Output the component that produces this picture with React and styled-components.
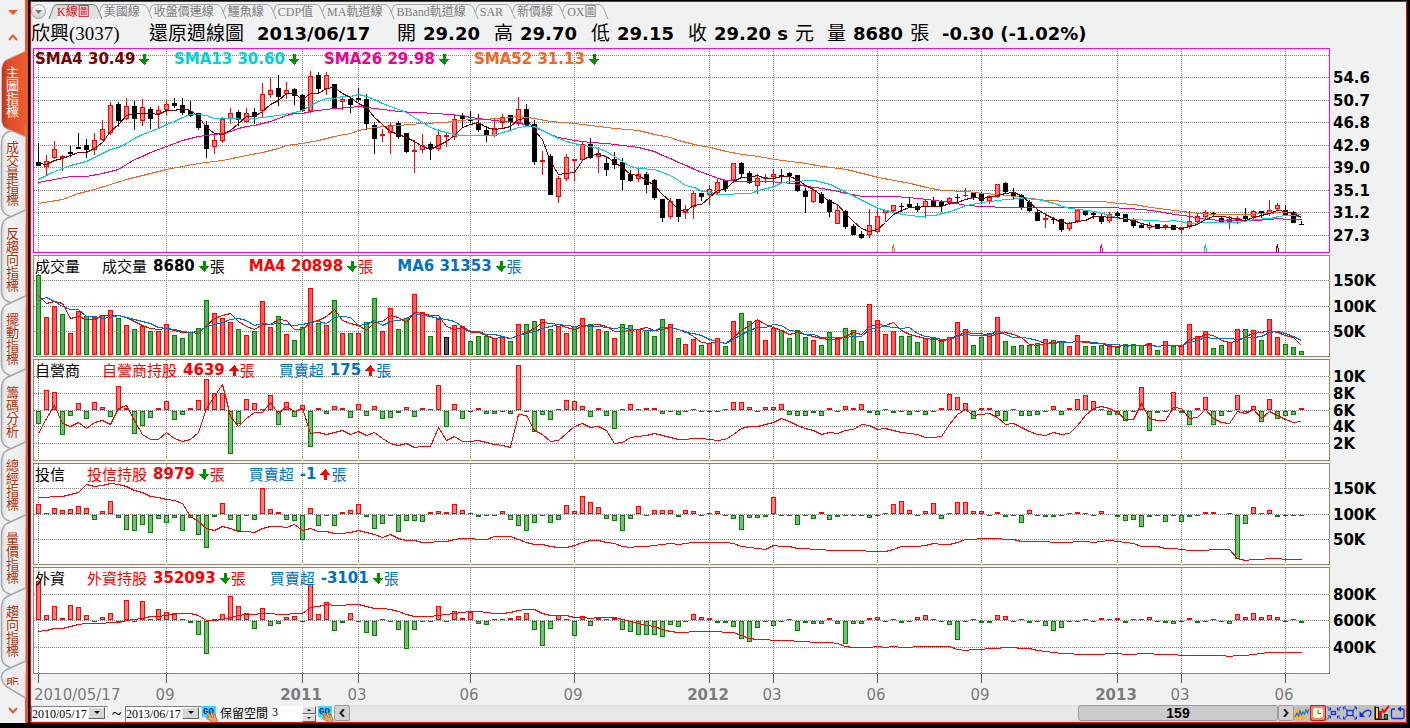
import React from 'react';
import styled, { createGlobalStyle } from 'styled-components';

const GlobalStyle = createGlobalStyle`
* { box-sizing: border-box; }
body {
  margin: 0;
  background: #000;
}
button, select, input { font: inherit; color: inherit; margin: 0; }
svg { display: block; }
`;

const WIDE = '"DejaVu Sans", "Noto Sans CJK TC", sans-serif';
const SERIF = '"Liberation Serif", "Noto Sans CJK TC", serif';

/* ---------- data ---------- */

const LEFT = 33;
const WIDTH = 1297;
// the time scale loses one pixel after the 81st week
const weekX = i => (i > 80 ? 37 : 38) + i * 8;

// high, open/close top, open/close bottom, low, colour
const candles = `143 162 166 166 k,155 161 167 175 r,141 149 158 159 r,155 156 158 171 r,146 152 154 157 k,133 147 149 149 k,139 145 150 158 k,133 140 150 155 r,120 129 140 141 r,102 105 133 135 r,
102 104 121 127 k,98 106 119 120 r,101 106 119 130 k,99 107 121 126 r,107 109 119 129 k,106 110 114 128 r,100 104 110 115 r,98 103 106 108 k,98 105 113 115 k,101 111 116 117 k,
113 113 128 130 k,121 125 149 158 k,134 140 147 154 r,117 119 141 143 r,108 113 119 124 r,110 112 120 126 k,108 113 122 123 r,108 112 117 124 k,83 94 111 117 r,78 90 95 98 r,
75 88 97 106 k,82 90 94 99 r,88 89 96 105 k,94 95 111 112 k,71 76 111 113 r,72 75 89 93 k,72 75 89 95 r,84 84 108 108 k,97 99 102 110 r,97 99 105 113 k,
88 98 100 102 k,94 99 124 130 k,122 125 139 154 k,129 134 136 142 r,122 125 133 154 r,121 123 137 139 k,133 133 152 153 k,140 150 152 173 r,134 145 150 153 r,142 144 149 160 k,
129 135 149 151 r,132 135 137 147 r,115 119 137 140 r,113 115 119 127 k,111 119 121 123 k,114 124 130 132 k,126 130 136 142 k,119 128 136 137 r,114 117 123 128 r,115 115 122 130 k,
97 109 124 126 r,104 109 125 127 k,120 124 162 165 k,151 160 162 175 r,154 156 195 195 k,176 178 197 203 r,154 157 179 181 r,159 159 161 181 r,141 144 160 161 r,138 144 158 159 k,
147 153 157 173 r,156 163 170 176 k,152 159 165 169 k,158 162 180 190 k,170 174 181 182 k,169 174 179 182 r,172 174 185 193 k,179 180 198 200 k,199 199 218 222 k,198 201 217 219 r,
199 199 217 222 k,205 209 213 219 r,191 193 207 219 r,193 193 197 201 k,185 189 195 205 r,178 182 193 194 r,180 180 189 192 k,163 163 180 183 r,162 163 174 178 k,171 173 183 184 k,
174 178 186 194 r,174 177 179 183 r,169 174 177 185 r,169 175 176 182 k,172 173 176 184 k,175 175 191 192 k,188 191 197 213 k,189 190 202 203 r,192 194 203 204 k,199 200 212 217 k,
204 210 224 224 r,210 211 227 229 k,224 226 235 235 k,231 234 238 239 k,209 225 235 238 r,209 216 232 233 r,210 210 213 222 r,205 205 211 213 r,203 206 207 212 k,198 204 207 208 k,
203 206 210 212 k,200 201 207 218 r,197 201 206 207 k,200 202 206 212 k,197 198 202 205 r,194 197 198 203 k,188 195 196 197 r,193 193 197 200 k,192 194 201 204 k,195 196 201 204 r,
184 184 197 198 r,182 183 192 194 k,188 192 196 199 k,194 195 207 210 k,200 202 211 212 k,210 212 221 221 k,213 218 220 228 r,217 219 220 224 k,219 219 230 232 k,222 223 229 231 r,
210 210 221 223 r,210 210 215 216 k,211 213 215 219 k,213 217 222 224 k,212 214 221 223 r,211 213 216 217 k,214 214 222 222 k,218 220 226 228 k,224 225 228 228 k,222 225 228 230 r,
224 224 229 229 k,224 225 227 230 r,225 225 230 230 k,227 227 230 234 r,211 221 226 229 r,214 216 222 225 r,210 212 217 219 r,212 213 215 216 k,217 218 222 223 k,216 219 222 229 r,
216 218 220 224 r,208 216 219 220 k,210 211 217 219 r,211 211 213 218 k,200 210 214 216 r,203 205 209 210 r,205 210 215 216 k,211 212 223 223 k,221 224 225 225 k`
  .split(',')
  .map(row => {
    const [high, top, bottom, low, tone] = row.trim().split(' ');
    return { high: +high, top: +top, bottom: +bottom, low: +low, tone };
  });

const volumes = `g275 r317 r306 g314 r333 r311 g316 r317 r315 r310 g318 r325 g329 r326 g331 r331 r324 g335 g338 g332
g328 g300 r313 r318 r322 g329 r335 g331 r301 r327 g316 r334 g340 g327 r288 g323 r325 g300 r333 g333
r333 g322 g298 r331 r308 g329 g318 r294 r312 g336 r319 k337 r325 r326 g341 g336 g336 r338 r337 g341
r324 g324 g321 r319 g329 r326 r333 g326 r318 g324 r329 g331 r338 g324 g325 r329 g330 g336 g319 r324
g338 r344 r339 g345 r343 r338 g346 r321 g313 g321 r320 r340 r328 g330 g338 g330 g337 r340 g345 g332
r338 g328 g330 g341 r304 r320 r334 r331 g336 g336 g342 r338 g338 g341 r337 r322 r329 g345 g337 r333
r317 g341 g346 g345 g345 g343 r339 g340 g341 r346 r335 g346 g346 g345 r345 g347 g344 g344 g345 r343
g350 r341 g346 r345 r324 r336 r331 g348 g345 r342 r329 g329 r330 g340 r319 r337 g344 g347 g351`
  .split(/\s+/)
  .map(v => ({ tone: v[0], top: +v.slice(1) }));

const numbers = text => text.trim().split(/\s+/).map(Number);

const dealerBars = numbers(`-13 20 18 -24 -5 7 -8 8 3 -6 24 2 -23 -15 -7 2 9 -9 -4 2 10 31 17 17 -43 -13 11 7 1 15 -14 8 -6 5 -36 2 -3 4 2 -7
6 -5 4 -8 -7 -2 3 -6 2 1 25 -16 6 -8 -1 2 -3 -3 -1 -3 45 -1 -21 -4 -9 1 10 9 4 -6 2 -5 -18 1 6 1 2 2 -3 -1 -4 -1
1 -1 -1 -1 1 8 8 3 -1 3 3 6 -4 -5 -5 -2 -5 2 -1 4 2 6 -2 -4 1 -2 -1 -4 -1 -4 -1 2 16 13 7 -8 2 2 -5 -10 1 -5 -5 -4 -1
4 -4 2 11 15 9 1 -4 -4 -10 -1 23 -20 -2 -1 18 -2 -14 2 13 -14 -5 -1 15 -1 4 -11 11 -8 -5 -4 2`);
const dealerLine = numbers(`433 418 405 423 426 422 428 422 420 424 408 405 420 434 439 439 432 438 441 439 432 408 396 384 416 426 418 412 412 402 413 406 411 408 433 432 434 432 430 434
431 435 432 438 443 445 443 447 446 446 427 440 436 441 441 440 442 444 445 447 414 415 430 434 441 440 433 426 423 427 426 430 443 442 437 436 435 433 435 437 439 439
438 438 439 440 439 434 428 426 426 424 422 418 421 425 428 430 434 432 433 430 429 424 425 429 428 430 432 433 434 437 437 436 424 414 409 415 414 413 417 424 423 427 431 434 435
432 434 433 425 415 408 406 408 412 419 419 403 418 420 420 407 408 418 417 409 418 422 423 411 413 409 418 411 415 419 422 421`);

const trustBars = numbers(`10 1 6 4 5 8 6 -5 3 13 -3 -15 -16 -10 -18 -4 -8 -3 -16 -3 -20 -33 -2 11 -5 -16 -1 -5 26 5 2 -5 -6 -25 6 -11 -1 -11 2 4
10 -2 -14 -9 -1 -17 -6 -6 -7 2 3 2 10 4 1 -2 -1 -1 3 -5 -11 -16 -8 -1 -8 -5 9 3 18 12 7 -4 -6 -16 -4 8 -1 4 4 4 -2 4
3 -1 1 3 -1 -4 -15 -3 -3 -2 17 -1 -1 -10 -1 -4 2 -5 -2 -1 -1 -1 -3 -1 1 10 13 4 -1 3 11 -4 1 12 12 3 3 -1 2 -2 -1 -8 4 -1 -2
-2 -1 1 2 1 -1 3 0 -2 -6 -5 -12 -2 -1 -7 -1 -7 -2 -1 2 2 0 1 -44 -9 7 1 4 -2 -1 -1 -1`);
const trustLine = numbers(`497 497 496 496 494 492 484 486 485 483 484 486 490 492 496 497 499 500 503 516 521 528 530 526 528 531 531 532 528 526 526 527 524 530 528 531 531 533 533 532
530 532 534 537 534 538 540 540 542 542 541 541 539 538 538 539 539 536 536 536 539 542 544 544 546 547 547 545 542 540 540 542 543 546 547 546 546 545 544 543 544 543
542 542 542 542 542 543 546 547 548 549 545 546 546 548 548 549 549 550 550 550 550 550 551 551 551 549 546 546 546 545 543 544 544 542 539 539 538 538 538 539 539 541 541 541 541
542 542 542 541 541 542 541 540 541 542 543 546 546 546 548 548 549 550 550 550 549 549 549 558 560 559 559 558 558 559 559 559`);

const foreignBars = numbers(`39 5 14 2 15 13 5 -1 3 7 -1 20 -1 19 1 11 8 6 1 -2 -14 -33 1 6 24 14 7 -8 12 -5 -3 3 4 -1 36 6 18 -10 -2 7
-1 -12 -15 1 -1 -9 -28 -9 -1 -1 14 -1 9 2 8 -3 -4 1 1 2 4 7 -9 -25 -8 5 1 -15 4 -5 2 1 2 -9 -11 -14 -14 -14 -16 -4 -6 -1
6 3 2 -2 -2 -6 -18 -21 -7 -1 -5 -1 1 -10 -2 -3 -3 2 -3 -23 -3 -3 2 3 -1 1 -2 -1 3 5 1 -1 -4 -19 -1 1 -2 -2 5 4 -1 1 -2 -1 -5
-10 -7 -1 -1 1 -1 2 1 2 -2 1 1 3 -1 -2 -3 -1 2 -2 -1 1 -1 -3 6 3 7 3 5 3 -1 1 -2`);
const foreignLine = numbers(`631 630 628 628 626 624 623 623 623 622 622 620 619 618 616 616 615 613 613 613 615 620 620 619 617 615 614 614 613 613 614 614 613 613 607 606 604 605 605 604
604 606 608 608 609 611 614 616 616 616 615 614 613 612 611 611 612 613 613 612 610 609 609 613 615 615 615 617 617 618 617 617 617 619 621 623 625 626 629 631 632 632
631 631 631 631 632 632 635 638 639 639 640 640 640 641 641 642 642 642 643 646 647 647 647 646 647 646 647 647 646 646 646 646 646 649 650 649 649 648 648 647 647 648 648 650 651
652 653 653 654 654 654 654 653 653 654 654 653 653 654 654 654 655 655 655 655 655 655 656 655 655 654 653 652 652 652 652 652`);

const sma13 = '38,179 52,172 62,168 70,165 78,163 86,161 94,157 102,153 110,149 118,147 126,143 134,138 142,134 150,131 158,128 166,124 174,121 182,117 190,114 198,114 206,115 214,118 230,118 246,119 262,117 278,115 294,112 302,110 310,105 318,101 326,98 334,98 342,96 350,96 358,94 366,96 374,99 382,103 398,109 406,112 414,117 422,122 430,127 438,130 446,132 454,134 462,135 494,135 502,132 510,130 518,127 526,126 534,126 542,130 550,134 558,138 566,141 574,143 582,145 590,146 598,148 606,151 614,156 622,161 630,166 638,168 654,169 662,172 670,175 678,180 685,185 694,187 702,191 710,192 718,194 750,193 758,190 766,188 774,186 782,182 790,181 814,180 830,184 838,188 846,192 854,196 862,200 870,204 878,208 886,210 894,212 902,214 910,215 918,216 934,215 942,213 950,211 958,208 966,205 982,202 990,201 1006,199 1022,198 1038,199 1046,201 1054,203 1062,206 1070,208 1094,211 1102,213 1110,215 1118,218 1134,219 1150,220 1166,221 1174,220 1190,223 1206,222 1222,222 1238,222 1254,219 1270,218 1278,216 1286,215 1294,215 1301,217';
const sma26 = '38,182 54,179 70,176 86,176 102,173 110,171 118,169 126,164 134,159 142,156 150,152 158,149 166,146 174,143 182,140 190,138 198,136 206,135 222,133 230,131 238,128 246,126 254,125 262,123 270,121 278,118 286,115 294,113 302,113 310,111 326,109 334,108 350,107 358,106 366,107 382,109 398,111 414,112 438,113 446,114 462,115 470,117 478,118 486,119 494,120 502,121 518,122 526,125 534,127 542,130 550,134 558,137 574,140 590,142 606,143 622,145 638,147 646,149 654,151 662,155 670,158 678,162 686,165 694,169 702,172 710,175 718,178 726,180 742,181 766,181 782,182 798,184 806,186 822,188 838,191 846,193 862,196 894,196 918,198 934,200 950,202 966,205 982,206 1006,207 1110,207 1126,208 1142,209 1158,211 1174,214 1190,216 1206,219 1222,220 1254,220 1270,219 1278,218 1286,219 1301,219';
const sma52 = '38,203 62,199 78,193 94,189 110,184 126,179 142,175 166,169 182,166 198,163 222,160 246,155 262,152 278,148 286,145 302,143 318,140 334,136 350,133 358,130 374,127 398,125 422,123 446,122 454,120 478,119 502,118 518,116 534,118 550,121 574,123 590,125 614,128 638,130 654,134 670,137 678,140 694,144 710,147 726,151 742,154 758,156 774,159 790,161 806,163 822,166 846,169 862,173 878,177 894,180 910,183 926,187 942,190 966,191 982,193 998,194 1014,196 1030,198 1046,200 1070,201 1102,201 1118,203 1134,204 1150,207 1166,209 1182,211 1198,213 1214,214 1246,214 1262,213 1286,212 1301,214';

// moving average over the last n values, with known leading values in front
const average = (values, n, lead) =>
  values.map((_, i) =>
    i < lead.length
      ? lead[i]
      : Math.round(values.slice(i - n + 1, i + 1).reduce((a, b) => a + b, 0) / n)
  );

const toPoints = ys => ys.map((y, i) => `${weekX(i)},${y}`).join(' ');

const closes = candles.map(c => (c.tone === 'r' ? c.top : c.bottom));
const sma4 = toPoints(average(closes, 4, [163, 164, 160]));
const tops = volumes.map(v => v.top);
const volumeMa4 = toPoints(average(tops, 4, [295, 303, 301]));
const volumeMa6 = toPoints(average(tops, 6, [300, 297, 301, 306, 309]));

const months = [
  { x: 38, text: '2010/05/17', start: true },
  { x: 166, text: '09' },
  { x: 302, text: '2011', bold: true },
  { x: 358, text: '03' },
  { x: 470, text: '06' },
  { x: 574, text: '09' },
  { x: 709, text: '2012', bold: true },
  { x: 773, text: '03' },
  { x: 877, text: '06' },
  { x: 981, text: '09' },
  { x: 1117, text: '2013', bold: true },
  { x: 1181, text: '03' },
  { x: 1285, text: '06' },
];

/* ---------- frame ---------- */

const Window = styled.div`
display: flex;
min-height: 100vh;
padding: 0 3px 5px 0;
background: #000;
font-family: ${WIDE};
`;

const Sidebar = styled.nav`
display: flex;
flex-direction: column;
width: 28px;
flex: none;
border-right: 3px solid #e9572b;
background: #f1f1f3;
`;

const Arrows = styled.div`
display: flex;
flex-direction: column;
height: 51px;
`;

const ArrowButton = styled.button`
display: flex;
justify-content: center;
align-items: center;
width: 25px;
height: 25px;
margin-top: ${p => (p.$last ? 'auto' : 0)};
padding: 0;
border: 0;
background: none;
`;

const SideTab = styled.button`
display: flex;
align-items: flex-start;
position: relative;
z-index: ${p => (p.$active ? 1 : 0)};
width: 25px;
height: ${p => p.$count * 13 + 21}px;
padding: ${p => (p.$active ? 14 : 16)}px 0 0 6px;
border: 0;
background: none;
color: ${p => (p.$active ? '#fff' : '#a8360e')};
font: 13px/13px "Noto Sans CJK TC", sans-serif;
text-align: left;
`;

const SideShape = styled.svg`
position: absolute;
left: 0;
top: 0;
overflow: visible;
`;

const SideText = styled.span`
position: relative;
width: 13px;
word-break: break-all;
`;

// the last tab only shows the lower half of its first character
const CutText = styled.span`
display: flex;
position: relative;
align-items: flex-end;
height: 8px;
overflow: hidden;
`;

const Main = styled.main`
display: flex;
flex-direction: column;
flex: 1;
min-width: 0;
margin: 1px 0 0 2px;
border: 1px solid #f00;
background: #f0f2f2;
`;

function SideShapeFor({ count, active }) {
  const h = count * 13 + 21;
  const d = `M25.5,0 L6,9 Q1.5,12 1.5,20 V${h - 4} Q2,${h + 3} 7,${h + 5} L25.5,${h + 13}`;
  const id = active ? 'sideActive' : 'sidePlain';
  return (
    <SideShape width="25" height={h} aria-hidden="true">
      <defs>
        <linearGradient id={id}>
          <stop offset="0" stopColor={active ? '#b8321a' : '#d9dadd'} />
          <stop offset="0.25" stopColor={active ? '#e04a28' : '#f3f3f5'} />
          <stop offset="1" stopColor={active ? '#ec5d2e' : '#e9eaec'} />
        </linearGradient>
      </defs>
      <path d={d} fill={`url(#${id})`} stroke={active ? '#c9bdbd' : '#a6a8ac'} strokeWidth={active ? 1 : 1.5} />
    </SideShape>
  );
}

const sideTabs = ['主圖指標', '成交量指標', '反趨向指標', '擺動指標', '籌碼分析', '總經指標', '量價指標', '趨向指標'];

function SideMenu() {
  return (
    <Sidebar>
      <Arrows>
        <ArrowButton aria-label="最上">
          <svg width="10" height="5"><path d="M0,0 H10 L5,5 Z" fill="#e9572b" /></svg>
        </ArrowButton>
        <ArrowButton aria-label="向上">
          <svg width="10" height="7"><path d="M1,6 L5,1.5 L9,6" fill="none" stroke="#e9572b" strokeWidth="2" /></svg>
        </ArrowButton>
      </Arrows>
      {sideTabs.map((name, i) => (
        <SideTab key={name} $count={name.length} $active={i === 0}>
          <SideShapeFor count={name.length} active={i === 0} />
          <SideText>{name}</SideText>
        </SideTab>
      ))}
      <SideTab $count={1}>
        <SideShape width="25" height="34" aria-hidden="true">
          <path d="M25.5,0 L6,9 Q0,13 2,19 Q3,23 7,26 L25.5,37" fill="#ededf0" stroke="#a6a8ac" strokeWidth="1.5" />
        </SideShape>
        <CutText>能</CutText>
      </SideTab>
      <ArrowButton aria-label="向下" $last>
        <svg width="10" height="7"><path d="M1,1 L5,5.5 L9,1" fill="none" stroke="#e9572b" strokeWidth="2" /></svg>
      </ArrowButton>
    </Sidebar>
  );
}

/* ---------- tabs and quote ---------- */

const TabBar = styled.nav`
display: flex;
align-items: flex-end;
height: 18px;
padding-bottom: 1px;
font: 12px/15px ${SERIF};
`;

const RoundButton = styled.button`
display: flex;
justify-content: center;
align-items: center;
width: 15px;
height: 15px;
padding: 0;
border: 1px solid #a0a0a0;
border-radius: 50%;
background: linear-gradient(#fff, #cfcfcf);
`;

const Tab = styled.button`
display: flex;
height: 15px;
padding: 0;
border: 0;
background: none;
color: ${p => (p.$active ? '#d8101c' : '#7c7c7c')};
white-space: nowrap;
`;

const TabText = styled.span`
border-top: 1px solid ${p => (p.$active ? '#777' : '#a4a4a4')};
background: ${p => (p.$active ? 'linear-gradient(#d4d4d4, #f0f2f2)' : 'none')};
line-height: 15px;
`;

const tabNames = ['K線圖', '美國線', '收盤價連線', '鱷魚線', 'CDP值', 'MA軌道線', 'BBand軌道線', 'SAR', '新價線', 'OX圖'];

function Tabs() {
  return (
    <TabBar>
      <RoundButton aria-label="選單">
        <svg width="7" height="4"><path d="M0,0 H7 L3.5,4 Z" fill="#777" /></svg>
      </RoundButton>
      <svg width="11" height="15" aria-hidden="true">
        <path d="M3,15 L7,4 Q8.500,.5 11,.5 V15 Z" fill="#e0e0e0" />
        <path d="M3,15 L7,4 Q8.500,.5 11,.5" fill="none" stroke="#777" />
      </svg>
      {tabNames.map((name, i) => (
        <Tab key={name} $active={i === 0}>
          <TabText $active={i === 0}>{name}</TabText>
          <svg width="14" height="15" aria-hidden="true">
            {i === 0 && <path d="M0,.5 H3 Q6,.5 7.500,4 L12,15 H0 Z" fill="#e0e0e0" />}
            <path d="M0,.5 H3 Q6,.5 7.500,4 L12,15" fill="none" stroke={i === 0 ? '#777' : '#a4a4a4'} />
            {i < tabNames.length - 1 && <path d="M14,.5 Q11.500,.5 10.500,5 L9.500,8" fill="none" stroke="#a4a4a4" />}
          </svg>
        </Tab>
      ))}
    </TabBar>
  );
}

const Quote = styled.header`
display: flex;
height: 28px;
font: bold 18px/28px "DejaVu Sans", sans-serif;
white-space: nowrap;
`;

const QuoteItem = styled.span`
display: flex;
gap: 7px;
min-width: ${p => p.$width}px;
`;

const Han = styled.span`
font: 19px/28px ${SERIF};
`;

function QuoteLine() {
  return (
    <Quote>
      <QuoteItem $width={118}><Han>欣興(3037)</Han></QuoteItem>
      <QuoteItem $width={108}><Han>還原週線圖</Han></QuoteItem>
      <QuoteItem $width={140}>2013/06/17</QuoteItem>
      <QuoteItem $width={97}><Han>開</Han>29.20</QuoteItem>
      <QuoteItem $width={97}><Han>高</Han>29.70</QuoteItem>
      <QuoteItem $width={97}><Han>低</Han>29.15</QuoteItem>
      <QuoteItem $width={139}><Han>收</Han>29.20 s<Han>元</Han></QuoteItem>
      <QuoteItem $width={115}><Han>量</Han>8680<Han>張</Han></QuoteItem>
      <QuoteItem>-0.30 (-1.02%)</QuoteItem>
    </Quote>
  );
}

/* ---------- panels ---------- */

const Panels = styled.div`
display: flex;
flex-direction: column;
gap: 2px;
padding-left: 2px;
`;

const Panel = styled.section`
display: flex;
position: relative;
height: ${p => p.$height}px;
`;

const Plot = styled.svg`
flex: 1;
min-width: 0;
height: 100%;
background: #fff;
shape-rendering: crispEdges;
`;

const Scale = styled.svg`
width: 76px;
height: 100%;
flex: none;
font: bold 15px "DejaVu Sans", sans-serif;
`;

const Legend = styled.div`
position: absolute;
left: 2px;
top: 0;
display: flex;
align-items: center;
gap: 22px;
height: 22px;
font: bold 15px/22px "DejaVu Sans", sans-serif;
white-space: nowrap;
`;

const LegendTitle = styled.span`
font: 15px/22px "Noto Sans CJK TC", sans-serif;
`;

const LegendItem = styled.span`
display: flex;
align-items: center;
gap: 4px;
height: 22px;
min-width: ${p => p.$width || 0}px;
color: ${p => p.color};
`;

const LegendHan = styled(LegendTitle)`
padding-right: 2px;
`;

const Unit = styled(LegendTitle)`
margin-left: -4px;
padding-right: 2px;
`;

function Trend({ up }) {
  return (
    <svg width="11" height="11" shapeRendering="crispEdges" aria-hidden="true">
      {up
        ? <path d="M4,11 V6 H0 L5.500,0 L10,6 H7 V11 Z" fill="#f00" />
        : <path d="M4,0 V5 H0 L5.500,11 L10,5 H7 V0 Z" fill="#009000" />}
    </svg>
  );
}

function Reading({ name, value, up, unit, color }) {
  return (
    <LegendItem color={color}>
      {name && <LegendHan>{name}</LegendHan>}
      {value}
      <Trend up={up} />
      {unit && <Unit>{unit}</Unit>}
    </LegendItem>
  );
}

function Line({ points, color }) {
  return <polyline points={points} transform="translate(.5 .5)" fill="none" stroke={color} />;
}

function ChartPanel({ top, height, border, ticks, gridOnly = [], legend, children }) {
  const bottom = top + height - 1;
  const right = LEFT + WIDTH - 1;
  const rows = [...ticks.map(t => t[0]), ...gridOnly];
  return (
    <Panel $height={height}>
      <Plot viewBox={`${LEFT} ${top} ${WIDTH} ${height}`} preserveAspectRatio="none">
        <g stroke="#808080" strokeDasharray="1 1">
          {rows.map(y => <line key={y} x1={LEFT + 1} x2={right} y1={y + 0.5} y2={y + 0.5} />)}
          {months.map(m => <line key={m.x} x1={m.x + 0.5} x2={m.x + 0.5} y1={top + 1} y2={bottom} />)}
        </g>
        {children}
        <rect x={LEFT + 0.5} y={top + 0.5} width={WIDTH - 1} height={height - 1} fill="none" stroke={border || '#948474'} />
        {!border && (
          <g fill="#ff0">
            {months.map(m => <rect key={m.x} x={m.x} y={bottom} width="1" height="1" />)}
            {rows.map(y => <rect key={y} x={right} y={y} width="1" height="1" />)}
          </g>
        )}
      </Plot>
      <Scale>
        {ticks.map(([y, label]) => <text key={y} x="3" y={y - top + 6}>{label}</text>)}
      </Scale>
      <Legend>{legend}</Legend>
    </Panel>
  );
}

function Candles() {
  return candles.map((c, i) => {
    const x = weekX(i);
    const red = c.tone === 'r';
    const body = Math.max(c.bottom - c.top, 1);
    return (
      <g key={i} fill={red ? '#f00' : '#000'}>
        <rect x={x} y={c.high} width="1" height={Math.max(c.low - c.high, 1)} />
        <rect x={x - 2} y={c.top} width="5" height={body} />
        {red && body > 2 && <rect x={x - 1} y={c.top + 1} width="3" height={body - 2} fill="#ff7c7c" />}
      </g>
    );
  });
}

const barTones = {
  r: ['#f00', '#ff5c5c'],
  g: ['#008400', '#5cb05c'],
  k: ['#000', '#5c5c5c'],
};

function VolumeBars() {
  return volumes.map((v, i) => (
    <rect
      key={i}
      x={weekX(i) - 1.5}
      y={v.top + 0.5}
      width="4"
      height={354 - v.top}
      stroke={barTones[v.tone][0]}
      fill={barTones[v.tone][1]}
    />
  ));
}

function FlowBars({ values, zero }) {
  return values.map((v, i) => {
    if (!v) return null;
    const up = v > 0;
    const size = Math.abs(v);
    const y = up ? zero - v : zero + 1;
    return (
      <g key={i}>
        <rect x={weekX(i) - 2} y={y} width="5" height={size} fill={up ? '#f00' : '#008400'} />
        {size > 2 && <rect x={weekX(i) - 1} y={y + 1} width="3" height={size - 2} fill={up ? '#ff7c7c' : '#78bc78'} />}
      </g>
    );
  });
}

const averages = [
  ['SMA4 30.49', '#780000', 117],
  ['SMA13 30.60', '#00d0d8', 128],
  ['SMA26 29.98', '#ec008c', 128],
  ['SMA52 31.13', '#f26522', 128],
];

const crossings = [[893, '#f26522'], [1101, '#ec008c'], [1205, '#00d0d8'], [1277, '#780000']];

const TimeAxis = styled.svg`
width: calc(100% - 78px);
height: 31px;
margin-left: 2px;
overflow: visible;
fill: #7c7c7c;
font: 15px "DejaVu Sans", sans-serif;
`;

const axisShare = x => `${((x - LEFT) / WIDTH) * 100}%`;

function Charts() {
  return (
    <>
      <Panels>
        <ChartPanel
          top={48}
          height={205}
          border="#f0f"
          gridOnly={[55]}
          ticks={[[77, '54.6'], [100, '50.7'], [122, '46.8'], [145, '42.9'], [167, '39.0'], [190, '35.1'], [212, '31.2'], [235, '27.3']]}
          legend={averages.map(([text, color, width]) => (
            <LegendItem key={text} color={color} $width={width}>{text}<Trend /></LegendItem>
          ))}
        >
          <Candles />
          <Line points={sma52} color="#f26522" />
          <Line points={sma26} color="#ec008c" />
          <Line points={sma13} color="#00d0d8" />
          <Line points={sma4} color="#780000" />
          {crossings.map(([x, color]) => (
            <Line key={x} color={color} points={`${x - 1},251 ${x - 1},248 ${x},244 ${x},247 ${x + 1},248 ${x + 1},251`} />
          ))}
        </ChartPanel>

        <ChartPanel
          top={255}
          height={102}
          ticks={[[280, '150K'], [306, '100K'], [331, '50K']]}
          legend={
            <>
              <LegendTitle>成交量</LegendTitle>
              <Reading name="成交量" value="8680" unit="張" color="#000" />
              <Reading value="MA4 20898" unit="張" color="#f00" />
              <Reading value="MA6 31353" unit="張" color="#0070c0" />
            </>
          }
        >
          <VolumeBars />
          <Line points={volumeMa4} color="#f00" />
          <Line points={volumeMa6} color="#0070c0" />
        </ChartPanel>

        <ChartPanel
          top={359}
          height={102}
          ticks={[[376, '10K'], [393, '8K'], [410, '6K'], [426, '4K'], [443, '2K']]}
          legend={
            <>
              <LegendTitle>自營商</LegendTitle>
              <Reading name="自營商持股" value="4639" up unit="張" color="#f00" />
              <Reading name="買賣超" value="175" up unit="張" color="#0070c0" />
            </>
          }
        >
          <FlowBars values={dealerBars} zero={410} />
          <Line points={toPoints(dealerLine)} color="#f00" />
        </ChartPanel>

        <ChartPanel
          top={463}
          height={102}
          ticks={[[488, '150K'], [514, '100K'], [539, '50K']]}
          legend={
            <>
              <LegendTitle>投信</LegendTitle>
              <Reading name="投信持股" value="8979" unit="張" color="#f00" />
              <Reading name="買賣超" value="-1" up unit="張" color="#0070c0" />
            </>
          }
        >
          <FlowBars values={trustBars} zero={514} />
          <Line points={toPoints(trustLine)} color="#f00" />
        </ChartPanel>

        <ChartPanel
          top={567}
          height={107}
          ticks={[[594, '800K'], [620, '600K'], [647, '400K']]}
          legend={
            <>
              <LegendTitle>外資</LegendTitle>
              <Reading name="外資持股" value="352093" unit="張" color="#f00" />
              <Reading name="買賣超" value="-3101" unit="張" color="#0070c0" />
            </>
          }
        >
          <FlowBars values={foreignBars} zero={620} />
          <Line points={toPoints(foreignLine)} color="#f00" />
        </ChartPanel>
      </Panels>
      <TimeAxis>
        {months.map(m => (
          <g key={m.x}>
            <line x1={axisShare(m.x + 0.5)} x2={axisShare(m.x + 0.5)} y1="0" y2="9" stroke="#606060" shapeRendering="crispEdges" />
            <text
              x={m.start ? 1 : axisShare(m.x - 1)}
              y="26"
              textAnchor={m.start ? 'start' : 'middle'}
              fontWeight={m.bold ? 'bold' : 'normal'}
            >
              {m.text}
            </text>
          </g>
        ))}
      </TimeAxis>
    </>
  );
}

/* ---------- bottom bar ---------- */

const BottomBar = styled.footer`
display: flex;
align-items: center;
height: 17px;
font: 12px/16px ${SERIF};
white-space: nowrap;
`;

const Combo = styled.span`
display: flex;
width: 77px;
height: 16px;
border: 1px solid;
border-color: #808080 #e0e0e0 #e0e0e0 #808080;
background: #fff;
`;

const DateSelect = styled.select`
width: 56px;
height: 14px;
padding: 0;
border: 0;
appearance: none;
background: #fff;
line-height: 14px;
overflow: visible;
`;

const Drop = styled.span`
display: flex;
justify-content: center;
align-items: center;
width: 17px;
height: 12px;
border: 1px solid;
border-color: #f8f8f8 #606060 #606060 #f8f8f8;
background: #d6d6d6;
`;

const Tilde = styled.span`
width: 17px;
text-align: center;
font-size: 18px;
`;

const IconButton = styled.button`
width: 16px;
height: 16px;
padding: 0;
border: 0;
background: none;
flex: none;
`;

const SpaceLabel = styled.label`
display: flex;
gap: 4px;
margin-left: 2px;
`;

const Count = styled.input`
width: 30px;
height: 16px;
padding: 0 0 3px;
border: 0;
background: #fff;
`;

const Spinner = styled.span`
display: flex;
flex-direction: column;
margin-right: 2px;
`;

const Step = styled.button`
display: flex;
justify-content: center;
align-items: center;
width: 14px;
height: 8px;
padding: 0;
border: 1px solid;
border-color: #fff #606060 #606060 #fff;
background: #dcdcdc;
`;

const Scroll = styled.div`
display: flex;
flex: 1;
height: 17px;
background: linear-gradient(#dcdee0, #e6e8ea 3px, #e6e8ea 14px, #d8dadc);
`;

const ScrollButton = styled.button`
display: flex;
justify-content: center;
align-items: center;
width: 16px;
height: 16px;
padding: 0;
border: 1px solid #9a9a9a;
border-radius: 2px;
background: #d2d2d2;
`;

const Thumb = styled.div`
width: 200px;
height: 16px;
margin-left: auto;
border: 1px solid #9a9a9a;
border-radius: 3px;
background: #cbcbcb;
text-align: center;
font: bold 14px/15px "Liberation Sans", sans-serif;
`;

const Tools = styled.div`
display: flex;
height: 17px;
background: #c0c0c0;
`;

function DateCombo({ label, value }) {
  return (
    <Combo>
      <DateSelect aria-label={label} defaultValue={value}>
        <option>{value}</option>
      </DateSelect>
      <Drop aria-hidden="true">
        <svg width="6" height="3"><path d="M0,0 H6 L3,3 Z" /></svg>
      </Drop>
    </Combo>
  );
}

function Go() {
  return (
    <IconButton aria-label="GO">
      <svg width="16" height="16">
        <rect width="14" height="11" fill="#3cd8fc" />
        <text x="1" y="8" fontFamily="Liberation Mono" fontSize="9" fontWeight="bold" fill="#0020a0">GO</text>
        <path d="M4,6 L6,5.500 L8,8.500 L9,5 L10.500,5.500 L11,8 L13,7 L13.500,9 L15.500,14 L12,16 L8,13.500 L4.500,11.500 L5,10 L7,10.500 Z" transform="translate(0 1)" fill="#e8a868" stroke="#9c5c28" strokeWidth=".7" />
        <path d="M9,9.500 L10,12 M11,9.500 L12,12" stroke="#9c5c28" strokeWidth=".6" />
      </svg>
    </IconButton>
  );
}

const blue = { fill: 'none', stroke: '#1030e0', strokeWidth: 1.3 };

function ToolButtons() {
  return (
    <Tools>
      <IconButton aria-label="走勢">
        <svg width="16" height="16">
          <path d="M0,4 H6 V9 H11 V15 H0 Z" fill="#fcb43c" />
          <path d="M1,12 L3,8 L4.500,11 L6,6 L7.500,10 L9,7 L10.500,9 L12,5 L13.500,8 L15,4" fill="none" stroke="#1878c8" strokeWidth="1.2" />
        </svg>
      </IconButton>
      <IconButton aria-label="時間">
        <svg width="16" height="16">
          <rect width="16" height="16" rx="2" fill="#c81818" />
          <rect x="1" y="1" width="14" height="14" rx="2" fill="#f08878" />
          <rect x="2.500" y="2.500" width="11" height="11" rx="3" fill="#fffbe0" stroke="#b89860" />
          <path d="M8,4.500 V8.500 H11" fill="none" stroke="#806000" />
        </svg>
      </IconButton>
      <IconButton aria-label="縮小">
        <svg width="16" height="16">
          <rect x="5.500" y="6.500" width="4" height="3" {...blue} />
          <path d="M1,1.500 L4,4.500 M4.500,2.500 V5 H2 M15,1.500 L12,4.500 M11.500,2.500 V5 H14 M1,14.500 L4,11.500 M4.500,13.500 V11 H2 M15,14.500 L12,11.500 M11.500,13.500 V11 H14" {...blue} strokeWidth="1" />
        </svg>
      </IconButton>
      <IconButton aria-label="放大">
        <svg width="16" height="16">
          <rect x="5" y="5.500" width="6" height="5" {...blue} />
          <path d="M5,5.500 L2,2.500 M1.500,4.500 V2 H4 M11,5.500 L14,2.500 M12,2 H14.500 V4.500 M5,10.500 L2,13.500 M1.500,11.500 V14 H4 M11,10.500 L14,13.500 M12,14 H14.500 V11.500" {...blue} strokeWidth="1" />
        </svg>
      </IconButton>
      <IconButton aria-label="復原">
        <svg width="16" height="16">
          <path d="M4,10 C6,5 12,3.500 13,7 C13.500,9 12,10.500 11,12" {...blue} />
          <path d="M1.500,6 V12 H7 Z" fill="#1030e0" />
        </svg>
      </IconButton>
      <IconButton aria-label="指標設定">
        <svg width="16" height="16">
          <path d="M1,1 V14.500 H14" fill="none" stroke="#000" />
          <rect x="1.500" y="2.500" width="3" height="11.500" fill="#ffe800" stroke="#000" />
          <rect x="5" y="6" width="3" height="8" fill="#e01010" />
          <rect x="8.500" y="11" width="2" height="3" fill="#28c8e8" />
          <rect x="10.500" y="9.500" width="3" height="4.500" fill="#20a050" stroke="#004000" />
          <path d="M8,4 L10,7 L15,1" fill="none" stroke="#e01010" strokeWidth="2" />
        </svg>
      </IconButton>
      <IconButton aria-label="重設">
        <svg width="16" height="16">
          <path d="M5,4 H3 Q1.500,4 1.500,5.500 V12 Q1.500,13.500 3,13.500 H12.500 Q14,13.500 14,12 V5.500 Q14,4 12.500,4 H8" {...blue} />
          <path d="M11,1 L7.500,4 L11,7 Z" fill="#1030e0" />
        </svg>
      </IconButton>
    </Tools>
  );
}

function Bottom() {
  return (
    <BottomBar>
      <DateCombo label="起始日期" value="2010/05/17" />
      <Tilde>~</Tilde>
      <DateCombo label="結束日期" value="2013/06/17" />
      <Go />
      <SpaceLabel>
        保留空間
        <Count defaultValue="3" />
      </SpaceLabel>
      <Spinner>
        <Step aria-label="增加"><svg width="4" height="2"><path d="M0,2 L2,0 L4,2 Z" /></svg></Step>
        <Step aria-label="減少"><svg width="4" height="2"><path d="M0,0 L2,2 L4,0 Z" /></svg></Step>
      </Spinner>
      <Go />
      <Scroll>
        <ScrollButton aria-label="向左">
          <svg width="6" height="8"><path d="M5,0 L1.500,4 L5,8" fill="none" stroke="#222" strokeWidth="2" /></svg>
        </ScrollButton>
        <Thumb>159</Thumb>
        <ScrollButton aria-label="向右">
          <svg width="6" height="8"><path d="M1,0 L4.500,4 L1,8" fill="none" stroke="#222" strokeWidth="2" /></svg>
        </ScrollButton>
      </Scroll>
      <ToolButtons />
    </BottomBar>
  );
}

export default function App() {
  return (
    <Window>
      <GlobalStyle />
      <SideMenu />
      <Main>
        <Tabs />
        <QuoteLine />
        <Charts />
        <Bottom />
      </Main>
    </Window>
  );
}
